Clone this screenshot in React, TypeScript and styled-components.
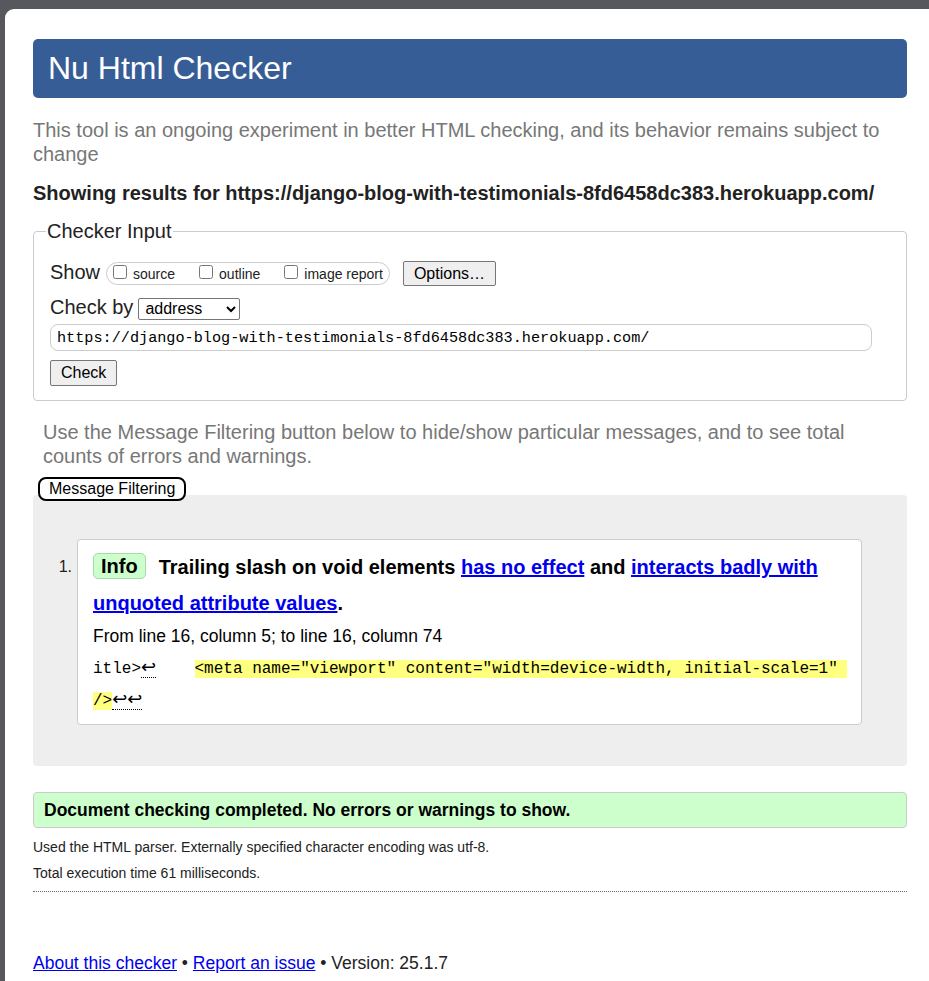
import React from "react";
import styled, { createGlobalStyle } from "styled-components";

const GlobalStyle = createGlobalStyle`
  html, body { margin: 0; padding: 0; }
  body {
    background: #57585d;
    font-family: "Liberation Sans", Arial, sans-serif;
    color: #222;
  }
`;

const Frame = styled.div`
  padding: 9px 0 0 5px;
  min-height: 100vh;
  box-sizing: border-box;
  display: flex;
`;

const Page = styled.div`
  flex: 1;
  background: #fff;
  border-top-left-radius: 9px;
  padding: 30px 22px 20px 28px;
  min-height: calc(100vh - 9px);
  box-sizing: border-box;
`;

const Header = styled.h1`
  margin: 0;
  height: 59px;
  line-height: 59px;
  background: #365d95;
  color: #fff;
  border-radius: 5px;
  padding: 0 15px;
  font-size: 32px;
  font-weight: normal;
`;

const Intro = styled.p<{ $indent?: number }>`
  margin: ${(p) => (p.$indent ? "20px" : "21px")} 0 0;
  padding-left: ${(p) => p.$indent ?? 0}px;
  font-size: 20px;
  line-height: 23.5px;
  color: #777;
`;

const Showing = styled.p`
  margin: 15px 0 0;
  font-size: 20px;
  line-height: 24px;
  font-weight: bold;
  color: #222;
`;

const Fieldset = styled.fieldset`
  margin: 14px 0 0;
  border: 1px solid #ccc;
  border-radius: 4px;
  padding: 4px 16px 14px;
`;

const Legend = styled.legend`
  font-size: 20px;
  line-height: 24px;
  padding: 0 1px;
  margin-left: -4px;
  color: #222;
`;

const Row = styled.div<{ $mt: number }>`
  display: flex;
  align-items: center;
  gap: 4px;
  margin-top: ${(p) => p.$mt}px;
  font-size: 20px;
  height: 25px;
`;

const RowLabel = styled.span`
  position: relative;
  top: -1px;
`;

const Pill = styled.span`
  display: inline-flex;
  align-items: center;
  height: 23px;
  box-sizing: border-box;
  border: 1px solid #ccc;
  border-radius: 12px;
  padding: 0 6px 0 6px;
  margin-left: 2px;
  font-size: 14px;
`;

const CheckLabel = styled.label`
  display: inline-flex;
  align-items: center;
  margin-right: 24px;
  &:last-child { margin-right: 0; }
  input {
    margin: 0 6px 0 0;
    width: 14px;
    height: 14px;
    position: relative;
    top: -2px;
  }
`;

const Button = styled.button<{ $h?: number }>`
  font-family: "Liberation Sans", Arial, sans-serif;
  font-size: 16px;
  height: ${(p) => p.$h ?? 26}px;
  padding: 0 10px;
  background: #efefef;
  border: 1px solid #767676;
  border-radius: 2px;
  color: #000;
`;

const Select = styled.select`
  font-family: "Liberation Sans", Arial, sans-serif;
  font-size: 16px;
  width: 102px;
  height: 22px;
  margin-left: 1px;
  border: 1px solid #767676;
  border-radius: 2px;
  background: #fff;
  color: #000;
  padding: 0 2px;
`;

const UrlInput = styled.input`
  display: block;
  box-sizing: border-box;
  width: 822px;
  height: 27px;
  margin-top: 3px;
  border: 1px solid #ccc;
  border-radius: 8px;
  padding: 0 6px;
  font-family: "Liberation Mono", "DejaVu Sans Mono", monospace;
  font-size: 15.2px;
  color: #000;
  background: #fff;
`;

const CheckWrap = styled.div`
  margin-top: 9px;
`;

const FilterBar = styled.div`
  margin-top: 9px;
  margin-bottom: -6px;
  padding-left: 5px;
  position: relative;
  z-index: 1;
`;

const FilterButton = styled.button`
  font-family: "Liberation Sans", Arial, sans-serif;
  font-size: 16px;
  height: 24px;
  padding: 0 9px;
  background: #fff;
  border: 2px solid #000;
  border-radius: 8px;
  color: #000;
`;

const Results = styled.div`
  background: #eee;
  border-radius: 4px;
  padding: 44px 45px 41px 0;
`;

const MessageItem = styled.div`
  display: grid;
  grid-template-columns: 44px 1fr;
`;

const Num = styled.span`
  font-size: 16px;
  text-align: right;
  padding-right: 5px;
  padding-top: 19px;
  color: #222;
`;

const Card = styled.div`
  background: #fff;
  border: 1px solid #ccc;
  border-radius: 4px;
  padding: 9px 14px 7px 15px;
`;

const Msg = styled.p`
  margin: 0;
  font-size: 20px;
  line-height: 36px;
  font-weight: bold;
  color: #000;
`;

const Badge = styled.span`
  display: inline-block;
  line-height: 24px;
  padding: 0 7px;
  background: #ccffcc;
  border: 1px solid #aad8aa;
  border-radius: 5px;
  margin-right: 13px;
  vertical-align: 1px;
`;

const Link = styled.a`
  color: #0000ee;
  text-decoration: underline;
`;

const Location = styled.p`
  margin: 5px 0 0;
  font-size: 17.5px;
  line-height: 20px;
  color: #000;
`;

const Extract = styled.p`
  margin: 7px 0 0;
  font-family: "Liberation Mono", "DejaVu Sans Mono", monospace;
  font-size: 16px;
  line-height: 32px;
  white-space: pre;
  color: #000;
`;

const Lf = styled.span`
  border-bottom: 1px dotted #000;
  font-family: "DejaVu Sans", sans-serif;
  font-size: 18px;
  line-height: 16px;
`;

const Mark = styled.mark`
  background: #ffff80;
  color: #000;
`;

const Success = styled.p`
  margin: 26px 0 0;
  height: 36px;
  box-sizing: border-box;
  line-height: 34px;
  background: #ccffcc;
  border: 1px solid #ccc;
  border-radius: 4px;
  padding: 0 10px;
  font-size: 17.5px;
  font-weight: bold;
  color: #000;
`;

const Details = styled.div`
  margin-top: 6px;
  padding-bottom: 5px;
  border-bottom: 1px dotted #666;
`;

const Detail = styled.p`
  margin: 0;
  font-size: 14px;
  line-height: 26px;
  color: #222;
`;

const Footer = styled.p`
  margin: 60px 0 0;
  font-size: 17.5px;
  line-height: 22px;
  color: #222;
`;

export default function App() {
  return (
    <>
      <GlobalStyle />
      <Frame>
        <Page>
          <Header>Nu Html Checker</Header>
          <Intro>
            This tool is an ongoing experiment in better HTML checking, and its
            behavior remains subject to change
          </Intro>
          <Showing>
            Showing results for
            https://django-blog-with-testimonials-8fd6458dc383.herokuapp.com/
          </Showing>
          <Fieldset>
            <Legend>Checker Input</Legend>
            <Row $mt={14}>
              <RowLabel>Show</RowLabel>
              <Pill>
                <CheckLabel>
                  <input type="checkbox" />
                  source
                </CheckLabel>
                <CheckLabel>
                  <input type="checkbox" />
                  outline
                </CheckLabel>
                <CheckLabel>
                  <input type="checkbox" />
                  image report
                </CheckLabel>
              </Pill>
              <Button $h={25} style={{ marginLeft: 9 }}>
                Options…
              </Button>
            </Row>
            <Row $mt={10}>
              <RowLabel>Check by</RowLabel>
              <Select defaultValue="address">
                <option value="address">address</option>
                <option value="file">file upload</option>
                <option value="text">text input</option>
              </Select>
            </Row>
            <UrlInput
              type="url"
              defaultValue="https://django-blog-with-testimonials-8fd6458dc383.herokuapp.com/"
            />
            <CheckWrap>
              <Button>Check</Button>
            </CheckWrap>
          </Fieldset>
          <Intro $indent={10}>
            Use the Message Filtering button below to hide/show particular
            messages, and to see total counts of errors and warnings.
          </Intro>
          <FilterBar>
            <FilterButton>Message Filtering</FilterButton>
          </FilterBar>
          <Results>
            <MessageItem>
              <Num>1.</Num>
              <Card>
                <Msg>
                  <Badge>Info</Badge>
                  Trailing slash on void elements{" "}
                  <Link href="#">has no effect</Link> and{" "}
                  <Link href="#">interacts badly with unquoted attribute values</Link>.
                </Msg>
                <Location>From line 16, column 5; to line 16, column 74</Location>
                <Extract>
                  itle&gt;<Lf>↩</Lf>
                  {"    "}
                  <Mark>
                    {'<meta name="viewport" content="width=device-width, initial-scale=1" '}
                    <br />
                    {"/>"}
                  </Mark>
                  <Lf>↩↩</Lf>
                </Extract>
              </Card>
            </MessageItem>
          </Results>
          <Success>Document checking completed. No errors or warnings to show.</Success>
          <Details>
            <Detail>
              Used the HTML parser. Externally specified character encoding was
              utf-8.
            </Detail>
            <Detail>Total execution time 61 milliseconds.</Detail>
          </Details>
          <Footer>
            <Link href="#">About this checker</Link> •{" "}
            <Link href="#">Report an issue</Link> • Version: 25.1.7
          </Footer>
        </Page>
      </Frame>
    </>
  );
}
